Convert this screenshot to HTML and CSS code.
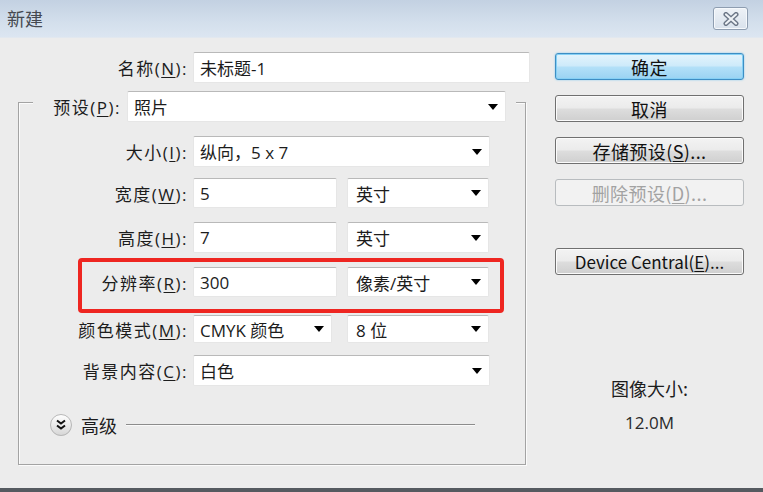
FILE: index.html
```html
<!DOCTYPE html>
<html lang="zh-CN">
<head>
<meta charset="utf-8">
<title>新建</title>
<link rel="stylesheet" href="styles.css">
</head>
<body>
<div class="window">
  <div class="titlebar">
    <span class="title">新建</span>
    <span class="close">
      <svg width="20" height="14" viewBox="0 0 20 14">
        <path d="M5 2.5 L15 11.5 M15 2.5 L5 11.5" stroke="#6b7686" stroke-width="5" stroke-linecap="round" fill="none"/>
        <path d="M5 2.5 L15 11.5 M15 2.5 L5 11.5" stroke="#eef2f6" stroke-width="2.2" stroke-linecap="round" fill="none"/>
      </svg>
    </span>
  </div>
  <div class="body">
    <div class="left">
      <div class="row name-row">
        <label class="lbl lbl-name">名称(<u>N</u>):</label>
        <div class="field w-name">未标题-1</div>
      </div>
      <div class="group">
        <div class="row preset-row">
          <label class="lbl lbl-preset">预设(<u>P</u>):</label>
          <div class="field select w-preset"><span>照片</span><i class="arrow"></i></div>
        </div>
        <div class="row r-size">
          <label class="lbl">大小(<u>I</u>):</label>
          <div class="field select w-full"><span>纵向，5 x 7</span><i class="arrow"></i></div>
        </div>
        <div class="row r-width">
          <label class="lbl">宽度(<u>W</u>):</label>
          <div class="field w-num">5</div>
          <div class="field select w-unit"><span>英寸</span><i class="arrow"></i></div>
        </div>
        <div class="row r-height">
          <label class="lbl">高度(<u>H</u>):</label>
          <div class="field w-num">7</div>
          <div class="field select w-unit"><span>英寸</span><i class="arrow"></i></div>
        </div>
        <div class="row r-res">
          <label class="lbl">分辨率(<u>R</u>):</label>
          <div class="field w-num">300</div>
          <div class="field select w-unit"><span>像素/英寸</span><i class="arrow"></i></div>
        </div>
        <div class="row r-mode">
          <label class="lbl">颜色模式(<u>M</u>):</label>
          <div class="field select w-mode"><span>CMYK 颜色</span><i class="arrow"></i></div>
          <div class="field select w-unit"><span>8 位</span><i class="arrow"></i></div>
        </div>
        <div class="row r-bg">
          <label class="lbl">背景内容(<u>C</u>):</label>
          <div class="field select w-full"><span>白色</span><i class="arrow"></i></div>
        </div>
        <div class="adv">
          <svg class="chev" width="24" height="24" viewBox="0 0 24 24">
            <defs>
              <linearGradient id="cg" x1="0" y1="0" x2="0" y2="1">
                <stop offset="0" stop-color="#ffffff"/>
                <stop offset="1" stop-color="#d6d6d6"/>
              </linearGradient>
            </defs>
            <circle cx="12" cy="12.5" r="10.5" fill="#c8c8c8"/>
            <circle cx="12" cy="12" r="10.5" fill="url(#cg)" stroke="#b8b8b8" stroke-width="1"/>
            <path d="M8 7.5 L12 10.5 L16 7.5 M8 12.5 L12 15.5 L16 12.5" stroke="#111" stroke-width="2" fill="none" stroke-linejoin="miter"/>
          </svg>
          <span class="adv-text">高级</span>
          <span class="adv-line"></span>
        </div>
        <div class="highlight"></div>
      </div>
    </div>
    <div class="right">
      <div class="btn btn-ok">确定</div>
      <div class="btn">取消</div>
      <div class="btn">存储预设(<u>S</u>)...</div>
      <div class="btn btn-disabled">删除预设(<u>D</u>)...</div>
      <div class="btn btn-device">Device Central(<u>E</u>)...</div>
      <div class="imgsize">图像大小:</div>
      <div class="imgval">12.0M</div>
    </div>
  </div>
</div>
</body>
</html>
```
FILE: styles.css
```css
html, body {
  margin: 0;
  padding: 0;
}
body {
  width: 763px;
  height: 492px;
  overflow: hidden;
  background: #ececec;
  font-family: "Open Sans", "Noto Sans CJK SC", sans-serif;
  font-size: 17px;
  color: #1c1c1c;
}
.window {
  height: 492px;
  box-sizing: border-box;
  border-bottom: 4px solid #555a60;
  display: flex;
  flex-direction: column;
}
.titlebar {
  height: 38px;
  flex: none;
  display: flex;
  align-items: center;
  justify-content: space-between;
  padding: 0 15px 0 7px;
  background: linear-gradient(#c3d1e2, #d3dfec 60%, #dce6f1);
  border-bottom: 1px solid #e2e8ef;
  box-sizing: border-box;
}
.title {
  font-family: "Noto Sans CJK SC", sans-serif;
  font-size: 18px;
  color: #464a51;
  margin-top: -2px;
}
.close {
  width: 35px;
  height: 23px;
  box-sizing: border-box;
  border: 1px solid #8e9db0;
  border-radius: 3px;
  background: linear-gradient(#eef2f7, #d9e2ec);
  box-shadow: inset 0 0 0 1px #f6f9fc;
  display: flex;
  align-items: center;
  justify-content: center;
}
.body {
  display: flex;
  padding: 14px 0 0 18px;
}
.left {
  width: 512px;
  flex: none;
}
.row {
  display: flex;
  align-items: center;
}
.lbl {
  flex: none;
  width: 169px;
  text-align: right;
  margin-right: 5px;
  white-space: nowrap;
  letter-spacing: 1.5px;
}
u {
  text-decoration: underline;
  text-underline-offset: 2px;
  text-decoration-thickness: 1px;
}
.lbl-name {
  width: 170px;
}
.field {
  box-sizing: border-box;
  height: 31px;
  background: #ffffff;
  border: 1px solid #e6e6e6;
  border-top-color: #b9b9b9;
  border-radius: 2px;
  padding-left: 6px;
  display: flex;
  align-items: center;
  flex: none;
  white-space: nowrap;
}
.select {
  justify-content: space-between;
}
.arrow {
  width: 0;
  height: 0;
  border-left: 5px solid transparent;
  border-right: 5px solid transparent;
  border-top: 6px solid #000;
  margin-right: 7px;
}
.w-name { width: 337px; }
.w-preset { width: 379px; }
.w-full { width: 297px; }
.w-num { width: 144px; margin-right: 10px; }
.w-unit { width: 142px; padding-left: 8px; }
.w-mode { width: 139px; margin-right: 15px; }

.name-row { height: 31px; }

.group {
  position: relative;
  margin-top: 19px;
  width: 508px;
  height: 363px;
  box-sizing: border-box;
  border: 1px solid #a3a3a3;
  box-shadow: 1px 1px 0 #fbfbfb, inset 1px 1px 0 #fbfbfb;
}
.preset-row {
  margin-top: -12px;
  margin-left: 14px;
  margin-right: 9px;
  padding-right: 10px;
  background: #ececec;
  height: 31px;
}
.lbl-preset {
  width: 88px;
  margin-right: 6px;
}
.r-size { margin-top: 14px; }
.r-width { margin-top: 11px; }
.r-width .field { height: 30px; }
.r-height { margin-top: 14px; }
.r-res { margin-top: 14px; }
.r-res .field { height: 30px; }
.r-mode { margin-top: 18px; }
.r-mode .field { height: 28px; }
.r-bg { margin-top: 12px; }

.adv {
  display: flex;
  align-items: center;
  margin-top: 27px;
  height: 24px;
  padding-left: 30px;
  margin-right: 50px;
}
.chev { flex: none; }
.adv-text {
  margin-left: 8px;
  font-family: "Noto Sans CJK SC", sans-serif;
  font-size: 18px;
}
.adv-line {
  flex: 1;
  height: 1px;
  background: #8c8c8c;
  border-bottom: 1px solid #fafafa;
  margin-left: 9px;
}
.highlight {
  position: absolute;
  left: 59px;
  top: 155px;
  width: 426px;
  height: 55px;
  box-sizing: border-box;
  border: 4px solid #ee2621;
  border-radius: 4px;
}

.right {
  margin-left: 25px;
  width: 189px;
  flex: none;
  display: flex;
  flex-direction: column;
  align-items: stretch;
  font-family: "Noto Sans CJK SC", sans-serif;
  font-size: 18px;
}
.btn {
  box-sizing: border-box;
  height: 27px;
  margin-top: 15px;
  border: 1px solid #707070;
  border-radius: 3px;
  background: linear-gradient(#f3f3f3 0%, #ebebeb 48%, #dddddd 52%, #cfcfcf 100%);
  box-shadow: inset 0 0 0 1px #fbfbfb;
  display: flex;
  align-items: center;
  justify-content: center;
  white-space: nowrap;
  color: #111;
  letter-spacing: 0.4px;
}
.btn-ok {
  margin-top: 1px;
  border-color: #3d8ec4;
  background: linear-gradient(#e4f4fc 0%, #cdeafa 48%, #b3e0f8 52%, #9ad3f2 100%);
  box-shadow: inset 0 0 0 1px #86d0f5, 0 0 2px #7cc7ef;
}
.btn-disabled {
  border-color: #b8bcbf;
  background: #f2f2f2;
  box-shadow: none;
  color: #a2a2a2;
}
.btn-device {
  margin-top: 42px;
  font-size: 17px;
  letter-spacing: 0;
}
.imgsize {
  margin-top: 101px;
  height: 24px;
  line-height: 24px;
  text-align: center;
}
.imgval {
  margin-top: 11px;
  height: 24px;
  line-height: 24px;
  text-align: center;
  color: #2a2a2a;
  font-family: "Open Sans", sans-serif;
  font-size: 17px;
}
```
